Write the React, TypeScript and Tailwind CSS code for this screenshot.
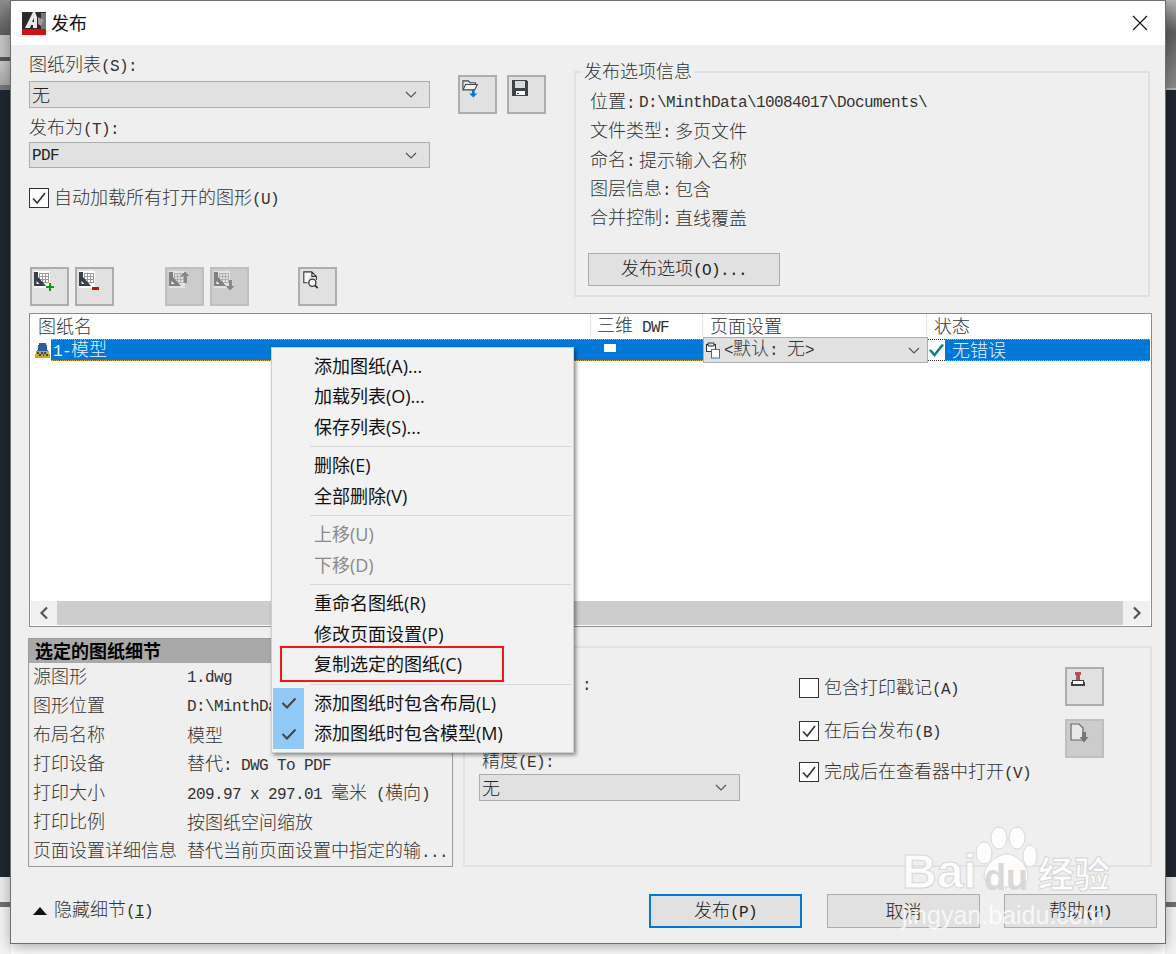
import React from "react";

const CJK = '"Noto Sans CJK SC", "Noto Sans", sans-serif';
const cjkFont = "font-['Noto_Sans_CJK_SC',sans-serif] font-light text-[18px]";
const monoFont = "font-['Liberation_Mono',monospace] text-[16px] tracking-[-0.6px]";

function T({ t, className = "" }: { t: string; className?: string }) {
  const parts = t.split(/([\u0000-\u00ff]+)/).filter(Boolean);
  return (
    <span className={"whitespace-pre leading-none " + className}>
      {parts.map((p, i) =>
        /^[\u0000-\u00ff]+$/.test(p) ? (
          <span key={i} className={monoFont}>{p}</span>
        ) : (
          <span key={i} className={cjkFont}>{p}</span>
        )
      )}
    </span>
  );
}

function Chevron({ color = "#555" }: { color?: string }) {
  return (
    <svg width="12" height="7" viewBox="0 0 12 7" fill="none">
      <path d="M1 1l5 5 5-5" stroke={color} strokeWidth="1.2" />
    </svg>
  );
}

function Select({ text, w, h }: { text: string; w: string; h: string }) {
  return (
    <div className={`${w} ${h} flex items-center justify-between bg-[#e1e1e1] border border-[#adadad] pl-[2px] pr-[12px] text-[#222]`}>
      <T t={text} />
      <Chevron />
    </div>
  );
}

function Check({ on = true }: { on?: boolean }) {
  return (
    <div className="w-[20px] h-[20px] shrink-0 bg-white border border-[#333] flex items-center justify-center">
      {on && (
        <svg width="16" height="14" viewBox="0 0 16 14" fill="none">
          <path d="M2 7.5l4.2 4.5L14 2" stroke="#333" strokeWidth="1.7" />
        </svg>
      )}
    </div>
  );
}

function IconBtn({ children, off = false, cls = "" }: { children: React.ReactNode; off?: boolean; cls?: string }) {
  return (
    <div className={`w-[39px] h-[39px] shrink-0 border-2 p-[2px] ${off ? "bg-[#cccccc] border-[#bfbfbf]" : "bg-[#e1e1e1] border-[#adadad]"} ${cls}`}>
      {children}
    </div>
  );
}

function Sheet({ dim = false, extra }: { dim?: boolean; extra?: React.ReactNode }) {
  const d = dim ? "#808080" : "#3b3f46";
  const g = dim ? "#b0b0b0" : "#9a9a9a";
  return (
    <svg width="20" height="20" viewBox="0 0 20 20" shapeRendering="crispEdges">
      <rect x="0" y="0" width="16" height="17" fill={dim ? "#e2e2e2" : "#fff"} />
      <path d="M5 2h9v1H5zM5 5h9v1H5zM5 8h9v1H5zM5 11h9v1H5zM5 2h1v10H5zM8 2h1v10H8zM11 2h1v10h-1zM14 2h1v10h-1z" fill={g} />
      <path d="M0 1h4v5l8 9H0z" fill={d} shapeRendering="auto" />
      <path d="M2.500 10l3 3h-3z" fill="#fff" shapeRendering="auto" />
      {extra}
    </svg>
  );
}

function Row({ a, b }: { a: string; b: string }) {
  return (
    <div className="h-[29px] flex items-center text-[#333] overflow-hidden pb-[2px]">
      <div className="w-[154px] shrink-0"><T t={a} /></div>
      <T t={b} />
    </div>
  );
}

function InfoLine({ a, b }: { a: string; b: string }) {
  return (
    <div className="h-[29px] flex items-center text-[#333]">
      <T t={a + ":"} />
      <T t={b} className="ml-[4px]" />
    </div>
  );
}

function Btn({ t, primary = false, cls = "" }: { t: string; primary?: boolean; cls?: string }) {
  return (
    <div className={`h-[34px] pb-[2px] flex items-center justify-center bg-[#e1e1e1] text-[#222] ${primary ? "border-2 border-[#0078d7]" : "border border-[#adadad]"} ${cls}`}>
      <T t={t} />
    </div>
  );
}

function MI({ t, off = false, checked = false }: { t: string; off?: boolean; checked?: boolean }) {
  return (
    <div
      className={`h-[30.5px] flex items-center text-[18px] leading-none ${off ? "text-[#8a8a8a]" : "text-[#111]"}`}
      style={{ fontFamily: `"Open Sans", ${CJK}` }}
    >
      <div className={`w-[31px] h-full ml-px flex items-center justify-center ${checked ? "bg-[#90c8f6]" : ""}`}>
        {checked && (
          <svg width="16" height="12" viewBox="0 0 16 12" fill="none">
            <path d="M1.5 6l4.5 4.5L14.5 1.5" stroke="#444" strokeWidth="2" />
          </svg>
        )}
      </div>
      <span className="ml-[10px] pb-px whitespace-pre">{t}</span>
    </div>
  );
}

const Sep = () => <div className="h-px bg-[#d7d7d7] my-[3.5px] ml-[38px] mr-[2px]" />;

export default function App() {
  return (
    <div className="relative w-[1176px] h-[954px] overflow-hidden bg-white flex">
      {/* desktop behind, left */}
      <div className="w-[11px] shrink-0 h-full flex flex-col">
        <div className="h-[35px] bg-gradient-to-b from-[#8f8f8f] to-[#5c5c5c]" />
        <div className="h-[22px] bg-[#c4c4c4]" />
        <div className="h-[4px] bg-[#555]" />
        <div className="h-[24px] bg-gradient-to-b from-[#c8c8c8] to-[#a9a9a9]" />
        <div className="h-[5px] bg-[#777]" />
        <div className="h-[787px] bg-[#1e2731]" />
        <div className="h-[25px] bg-[#ececec]" />
        <div className="h-[5px] bg-[#6f6f6f]" />
        <div className="flex-1 bg-[#f4f4f4]" />
      </div>

      {/* dialog */}
      <div className="relative z-10 w-[1154px] h-[942px] mt-px bg-[#efefef] shrink-0 flex flex-col shadow-[0_0_0_1px_#6e6e6e,0_4px_14px_rgba(0,0,0,0.35)]">
        {/* title bar */}
        <div className="h-[44px] shrink-0 bg-white flex items-center">
          <svg className="ml-[11px]" width="24" height="24" viewBox="0 0 24 24">
            <rect x="0" y="1" width="24" height="23" fill="#2a2a2a" />
            <rect x="19" y="2" width="5" height="16" fill="#777" />
            <rect x="0" y="18" width="24" height="6" fill="#d40f14" />
            <path d="M3 17L11 1h2l2 5v11h-4v-3H9l-1 3z" fill="#e8e8e8" />
            <path d="M10 11h2V7z" fill="#2a2a2a" />
            <path d="M16 6l6 3-3 6-3-2z" fill="#9a9a9a" />
          </svg>
          <span className="ml-[5px] pb-[2px] text-[18px] text-[#111]" style={{ fontFamily: CJK }}>发布</span>
          <svg className="ml-auto mr-[17px]" width="16" height="16" viewBox="0 0 16 16" fill="none">
            <path d="M1 1l14 14M15 1L1 15" stroke="#111" strokeWidth="1.1" />
          </svg>
        </div>

        {/* top section */}
        <div className="h-[268px] shrink-0 flex">
          <div className="w-[401px] ml-[18px] shrink-0">
            <div className="h-[25px] mt-[7px] flex items-center text-[#333]"><T t="图纸列表(S):" /></div>
            <div className="mt-[4px]"><Select text="无" w="w-[401px]" h="h-[27px]" /></div>
            <div className="h-[27px] mt-[6px] flex items-center text-[#333]"><T t="发布为(T):" /></div>
            <div className="mt-px"><Select text="PDF" w="w-[401px]" h="h-[26px]" /></div>
            <div className="mt-[20px] h-[20px] flex items-center gap-[5px] text-[#333]">
              <Check /><T t="自动加载所有打开的图形(U)" className="pb-[2px]" />
            </div>
            <div className="mt-[59px] ml-px flex">
              <IconBtn><Sheet extra={<path d="M15 12h2v3h3v2h-3v3h-2v-3h-3v-2h3z" fill="#0a9a17" />} /></IconBtn>
              <IconBtn cls="ml-[6px]"><Sheet extra={<rect x="13" y="16" width="7" height="3" fill="#c01313" />} /></IconBtn>
              <IconBtn off cls="ml-[51px]"><Sheet dim extra={<path d="M16 0l4 5h-2.5v7h-3V5H12z" fill="#888" />} /></IconBtn>
              <IconBtn off cls="ml-[6px]"><Sheet dim extra={<path d="M16 20l4-5h-2.5V9h-3v6H12z" fill="#888" />} /></IconBtn>
              <IconBtn cls="ml-[49px]">
                <svg width="18" height="18" viewBox="0 0 20 20" fill="none">
                  <path d="M11 1H2v12h4M11 1l5 5v4M11 1v5h5" stroke="#333" strokeWidth="1.2" fill="#f4f4f4" />
                  <circle cx="11.5" cy="13" r="4" stroke="#333" strokeWidth="1.4" fill="#f4f4f4" />
                  <path d="M14.5 16l3 3" stroke="#333" strokeWidth="2" />
                </svg>
              </IconBtn>
            </div>
          </div>
          <div className="ml-[28px] mt-[30px] flex gap-[10px] items-start">
            <IconBtn>
              <svg width="18" height="20" viewBox="0 0 20 22" fill="none">
                <path d="M1 11V2h6l2 2h6v2" stroke="#444" strokeWidth="1.2" />
                <path d="M1 12l3-6h13l-3 6z" stroke="#444" strokeWidth="1.2" fill="#f2f2f2" />
                <path d="M11 11h3v5h3l-4.500 4.500L8 16h3z" fill="#0b78d0" />
              </svg>
            </IconBtn>
            <IconBtn>
              <svg width="18" height="18" viewBox="0 0 20 20" shapeRendering="crispEdges">
                <path d="M1 1h16l2 2v16H1z" fill="#3d4148" />
                <rect x="4" y="2" width="12" height="8" fill="#d9d9d9" />
                <rect x="5" y="13" width="10" height="5" fill="#fff" />
                <rect x="7" y="15" width="2" height="2" fill="#3d4148" />
              </svg>
            </IconBtn>
          </div>
          <div className="relative ml-[28px] mt-[26px] w-[576px] h-[226px] border-2 border-[#e0e0e0] pl-[14px] pt-[14px]">
            <div className="absolute left-[6px] top-[-13px] h-[20px] px-[2px] bg-[#efefef] flex items-center text-[#333]"><T t="发布选项信息" /></div>
            <InfoLine a="位置" b="D:\MinthData\10084017\Documents\" />
            <InfoLine a="文件类型" b="多页文件" />
            <InfoLine a="命名" b="提示输入名称" />
            <InfoLine a="图层信息" b="包含" />
            <InfoLine a="合并控制" b="直线覆盖" />
            <Btn t="发布选项(O)..." cls="w-[192px] -ml-[2px] mt-[21px] !h-[33px]" />
          </div>
        </div>

        {/* sheet list */}
        <div className="ml-[18px] w-[1123px] h-[314px] shrink-0 bg-white border border-[#8c8c8c] flex flex-col">
          <div className="h-[25px] shrink-0 pb-[2px] flex text-[#333]">
            <div className="w-[561px] pl-[8px] flex items-center border-r border-[#e4e4e4]"><T t="图纸名" /></div>
            <div className="w-[112px] pl-[6px] flex items-center border-r border-[#e4e4e4]"><T t="三维 DWF" /></div>
            <div className="w-[224px] pl-[7px] flex items-center border-r border-[#e4e4e4]"><T t="页面设置" /></div>
            <div className="flex-1 pl-[7px] flex items-center"><T t="状态" /></div>
          </div>
          <div className="h-[22px] shrink-0 flex">
            <div className="w-[21px] shrink-0 flex items-center justify-end pr-px">
              <svg width="15" height="16" viewBox="0 0 16 16" shapeRendering="crispEdges">
                <path d="M4 1h8l3 15H1z" fill="#2b5f9e" />
                <path d="M1 9h14l1 7H0z" fill="#c8a81e" />
                <path d="M2 10h2v2H2zM6 10h2v2H6zM10 10h2v2h-2zM4 12h2v2H4zM8 12h2v2H8zM12 12h2v2h-2z" fill="#1d4f86" />
              </svg>
            </div>
            <div className="w-[652px] shrink-0 bg-[#0078d7] border-y border-dotted border-[#e8a33d] flex text-white">
              <div className="pl-[2px] pb-[2px] h-full flex items-center text-[#eaf4ff]"><T t="1-模型" /></div>
              <div className="ml-[497px] mt-[4px] w-[12px] h-[8px] bg-white" />
            </div>
            <div className="w-[225px] h-[26px] -mt-[2px] shrink-0 bg-[#e1e1e1] border border-[#adadad] flex items-center text-[#333] pl-[1px] pr-[7px] z-[1]">
              <svg width="16" height="18" viewBox="0 0 16 18" fill="none">
                <rect x="1.500" y="3.500" width="9" height="7" stroke="#333" fill="#fff" />
                <path d="M3 2h6v3H3z" stroke="#333" fill="#ddd" />
                <rect x="6.500" y="8.500" width="8" height="8.500" stroke="#1b78c8" fill="#fff" />
              </svg>
              <span className="ml-[3px] pb-[2px]"><T t="<默认: 无>" /></span>
              <span className="ml-auto"><Chevron /></span>
            </div>
            <div className="w-[17px] shrink-0 flex items-center justify-center border-y border-dotted border-[#333]">
              <svg width="15" height="14" viewBox="0 0 15 14" fill="none">
                <path d="M1 7l4.500 5L14 1.500" stroke="#14789a" strokeWidth="2.600" />
              </svg>
            </div>
            <div className="flex-1 bg-[#0078d7] border-y border-dotted border-[#e8a33d] flex items-center pl-[7px] pb-[2px] text-[#eaf4ff] mr-px"><T t="无错误" /></div>
          </div>
          <div className="flex-1" />
          <div className="h-[24px] mb-px mx-px shrink-0 bg-[#f0f0f0] flex items-center">
            <div className="w-[26px] h-full flex items-center justify-center">
              <svg width="10" height="14" viewBox="0 0 10 14" fill="none"><path d="M8 1.500L2.500 7 8 12.500" stroke="#555" strokeWidth="2.200" /></svg>
            </div>
            <div className="flex-1 h-full bg-[#cdcdcd]" />
            <div className="w-[27px] h-full flex items-center justify-center">
              <svg width="10" height="14" viewBox="0 0 10 14" fill="none"><path d="M2 1.500L7.500 7 2 12.500" stroke="#555" strokeWidth="2.200" /></svg>
            </div>
          </div>
        </div>

        {/* lower section */}
        <div className="h-[240px] shrink-0 flex items-start">
          <div className="ml-[17px] mt-[11px] w-[425px] h-[229px] shrink-0 border border-[#9a9a9a] flex flex-col">
            <div className="h-[24px] shrink-0 bg-[#a9a9a9] flex items-center pl-[6px] pb-[2px] text-black">
              <span className="text-[18px] font-bold leading-none" style={{ fontFamily: CJK }}>选定的图纸细节</span>
            </div>
            <div className="pl-[4px] pr-[2px]">
              <Row a="源图形" b="1.dwg" />
              <Row a="图形位置" b="D:\MinthData\10084017\Documents\" />
              <Row a="布局名称" b="模型" />
              <Row a="打印设备" b="替代: DWG To PDF" />
              <Row a="打印大小" b="209.97 x 297.01 毫米 (横向)" />
              <Row a="打印比例" b="按图纸空间缩放" />
              <Row a="页面设置详细信息" b="替代当前页面设置中指定的输..." />
            </div>
          </div>
          <div className="ml-[10px] mt-[19px] w-[689px] h-[221px] shrink-0 border-2 border-[#e2e2e2] flex">
            <div className="w-[334px] shrink-0 pl-[14px] text-[#333]">
              <div className="ml-[103px] mt-[27px] h-[20px] flex items-center"><T t=":" /></div>
              <div className="ml-[3px] mt-[53px] h-[26px] flex items-center pb-[2px]"><T t="精度(E):" /></div>
              <Select text="无" w="w-[261px]" h="h-[27px]" />
            </div>
            <div className="w-[266px] shrink-0 pt-[30px] text-[#333]">
              <div className="h-[20px] flex items-center gap-[5px]"><Check on={false} /><T t="包含打印戳记(A)" className="pb-[2px]" /></div>
              <div className="mt-[23px] h-[20px] flex items-center gap-[5px]"><Check /><T t="在后台发布(B)" className="pb-[2px]" /></div>
              <div className="mt-[21px] h-[20px] flex items-center gap-[5px]"><Check /><T t="完成后在查看器中打开(V)" className="pb-[2px]" /></div>
            </div>
            <div className="pt-[19px] flex flex-col gap-[13px]">
              <IconBtn>
                <svg width="18" height="18" viewBox="0 0 20 20" shapeRendering="crispEdges">
                  <path d="M7 1h6v3h-1v6h-4V4H7z" fill="#b2525a" />
                  <path d="M4 10h12l2 3v4H2v-4z" fill="#3d4148" />
                  <path d="M5 11h10l1 3H4z" fill="#fff" />
                </svg>
              </IconBtn>
              <IconBtn off>
                <svg width="20" height="20" viewBox="0 0 20 20" fill="none">
                  <path d="M2 1h8l4 4v12H2z" fill="#e8e8e8" stroke="#666" strokeWidth="1.200" />
                  <path d="M13 9h4v5h2.500L15 19.500 10.500 14H13z" fill="#777" />
                </svg>
              </IconBtn>
            </div>
          </div>
        </div>

        {/* footer */}
        <div className="flex-1 flex items-start pt-[27px] pl-[22px] pr-[8px] text-[#333]">
          <div className="h-[34px] flex items-center">
            <svg width="14" height="9" viewBox="0 0 14 9"><path d="M7 0l7 8H0z" fill="#111" /></svg>
            <span className="ml-[7px] pb-[2px]"><T t="隐藏细节(" /><span className="underline font-['Liberation_Mono',monospace] text-[16px] tracking-[-0.6px] leading-none">I</span><T t=")" /></span>
          </div>
          <div className="ml-auto flex">
            <Btn primary t="发布(P)" cls="w-[153px]" />
            <Btn t="取消" cls="w-[153px] ml-[25px]" />
            <Btn t="帮助(H)" cls="w-[153px] ml-[24px]" />
          </div>
        </div>
      </div>

      {/* desktop behind, right */}
      <div className="w-[11px] shrink-0 h-full flex flex-col">
        <div className="h-[32px] bg-gradient-to-b from-[#b5b5b5] to-[#5e5e5e]" />
        <div className="h-[56px] bg-gradient-to-b from-[#5e5e5e] to-[#8a8a8a]" />
        <div className="h-[2px] bg-[#b0b0b0]" />
        <div className="h-[787px] bg-[#1e2731]" />
        <div className="h-[25px] bg-[#ececec]" />
        <div className="h-[5px] bg-[#6f6f6f]" />
        <div className="flex-1 bg-[#f4f4f4]" />
      </div>

      {/* context menu */}
      <div className="absolute z-20 left-[271px] top-[347px] w-[303px] h-[406px] bg-[#f2f2f2] border border-[#cfcfcf] pt-[3px] shadow-[2px_2px_4px_rgba(0,0,0,0.45)]">
        <MI t="添加图纸(A)..." />
        <MI t="加载列表(O)..." />
        <MI t="保存列表(S)..." />
        <Sep />
        <MI t="删除(E)" />
        <MI t="全部删除(V)" />
        <Sep />
        <MI off t="上移(U)" />
        <MI off t="下移(D)" />
        <Sep />
        <MI t="重命名图纸(R)" />
        <MI t="修改页面设置(P)" />
        <MI t="复制选定的图纸(C)" />
        <Sep />
        <MI checked t="添加图纸时包含布局(L)" />
        <MI checked t="添加图纸时包含模型(M)" />
      </div>

      {/* red annotation */}
      <div className="absolute z-30 left-[280px] top-[646px] w-[224px] h-[36px] border-2 border-[#f01818]" />

      {/* watermark */}
      <div className="absolute z-30 left-[902px] top-[826px] w-[212px] h-[104px] text-white pointer-events-none">
        <svg className="absolute left-[72px] top-[0px]" width="64" height="62" viewBox="0 0 64 62" fill="#ffffff" stroke="#d8d8d8" strokeWidth="1" opacity="0.92">
          <ellipse cx="10" cy="27" rx="8" ry="11" />
          <ellipse cx="25" cy="12" rx="8" ry="11" />
          <ellipse cx="43" cy="12" rx="8" ry="11" />
          <ellipse cx="56" cy="30" rx="7" ry="11" />
          <path d="M33 28c9 0 21 11 21 22 0 8-8 11-21 11S10 58 10 50c0-11 14-22 23-22z" />
        </svg>
        <span className="absolute left-[0px] top-[22px] text-[48px] font-bold leading-none opacity-85" style={{ fontFamily: '"Liberation Sans", sans-serif', WebkitTextStroke: "1px #d4d4d4" }}>Bai</span>
        <span className="absolute left-[82px] top-[34px] text-[36px] font-bold leading-none text-[#d8d8d8]" style={{ fontFamily: '"Liberation Sans", sans-serif' }}>du</span>
        <span className="absolute left-[136px] top-[28px] text-[36px] font-bold leading-none opacity-90" style={{ fontFamily: CJK, WebkitTextStroke: "1px #d4d4d4" }}>经验</span>
        <span className="absolute left-0 top-[77px] text-[25px] leading-none whitespace-pre opacity-75" style={{ fontFamily: '"Liberation Sans", sans-serif' }}>jingyan.baidu.com</span>
      </div>
    </div>
  );
}
